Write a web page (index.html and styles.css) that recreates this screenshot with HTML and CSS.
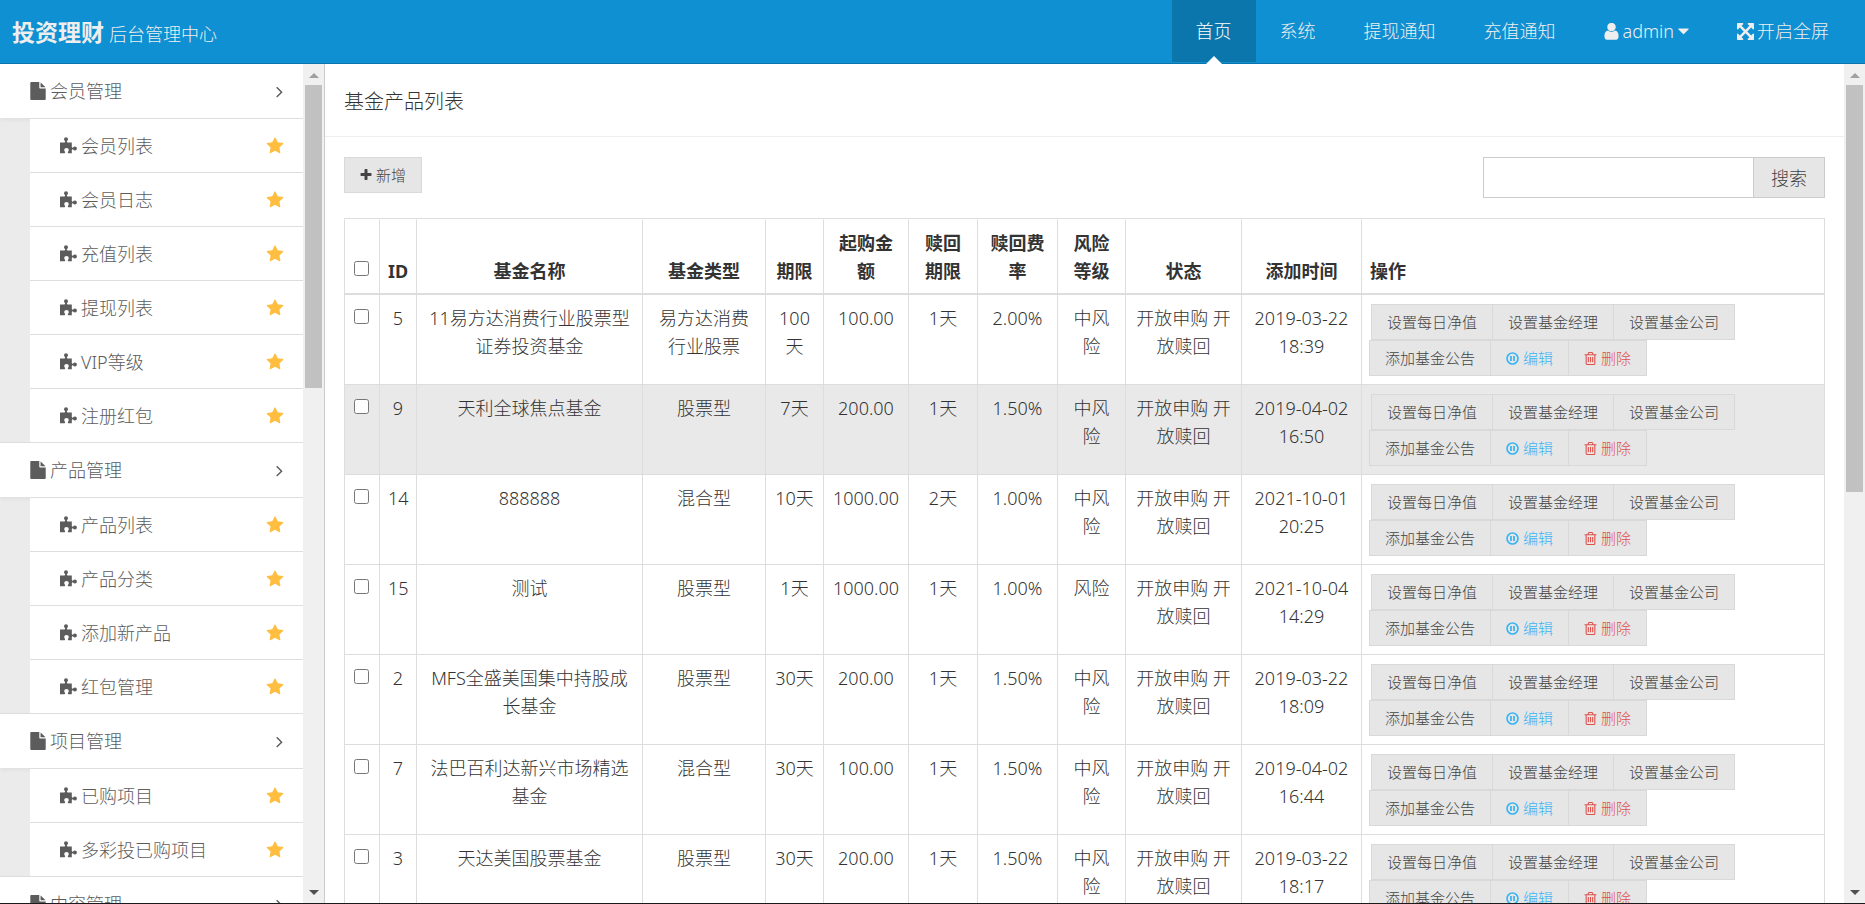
FILE: index.html
```html
<!DOCTYPE html>
<html lang="zh-CN">
<head>
<meta charset="utf-8">
<title>投资理财 后台管理中心</title>
<link rel="stylesheet" href="styles.css">
</head>
<body>
<svg class="sprite" aria-hidden="true">
  <symbol id="i-file" viewBox="128 0 1536 1792"><path d="M1152 512v-472q22 14 36 28l408 408q14 14 28 36h-472zm-128 32q0 40 28 68t68 28h544v1056q0 40-28 68t-68 28h-1344q-40 0-68-28t-28-68v-1600q0-40 28-68t68-28h800v544z"/></symbol>
  <symbol id="i-star" viewBox="0 0 1792 1792"><path d="M1728 647q0 22-26 48l-363 354 86 500q1 7 1 20 0 21-10.5 35.5t-30.5 14.5q-19 0-40-12l-449-236-449 236q-22 12-40 12-21 0-31.5-14.5t-10.5-35.5q0-6 2-20l86-500-364-354q-25-27-25-48 0-37 56-46l502-73 225-455q19-41 49-41t49 41l225 455 502 73q56 9 56 46z"/></symbol>
  <symbol id="i-plus" viewBox="128 128 1536 1536"><path d="M1600 736v192q0 40-28 68t-68 28h-416v416q0 40-28 68t-68 28h-192q-40 0-68-28t-28-68v-416h-416q-40 0-68-28t-28-68v-192q0-40 28-68t68-28h416v-416q0-40 28-68t68-28h192q40 0 68 28t28 68v416h416q40 0 68 28t28 68z"/></symbol>
  <symbol id="i-caret" viewBox="384 0 1024 1792"><path d="M1408 704q0 26-19 45l-448 448q-19 19-45 19t-45-19l-448-448q-19-19-19-45t19-45 45-19h896q26 0 45 19t19 45z"/></symbol>
  <symbol id="i-user" viewBox="256 150 1280 1540"><path d="M1536 1399q0 109-62.500 187t-150.500 78h-854q-88 0-150.500-78t-62.500-187q0-85 8.500-160.500t31.500-152 58.500-131 94-89 134.500-34.500q131 128 313 128t313-128q76 0 134.500 34.500t94 89 58.500 131 31.500 152 8.500 160.500zm-256-887q0 159-112.500 271.500t-271.500 112.500-271.500-112.500-112.500-271.500 112.500-271.500 271.500-112.500 271.500 112.500 112.500 271.500z"/></symbol>
  <symbol id="i-full" viewBox="128 128 1536 1536"><path d="M1411 541l-355 355 355 355 144-144q29-31 70-14 39 17 39 59v448q0 26-19 45t-45 19h-448q-42 0-59-40-17-39 14-69l144-144-355-355-355 355 144 144q31 30 14 69-17 40-59 40h-448q-26 0-45-19t-19-45v-448q0-42 40-59 39-17 69 14l144 144 355-355-355-355-144 144q-19 19-45 19-12 0-24-5-40-17-40-59v-448q0-26 19-45t45-19h448q42 0 59 40 17 39-14 69l-144 144 355 355 355-355-144-144q-31-30-14-69 17-40 59-40h448q26 0 45 19t19 45v448q0 42-39 59-13 5-25 5-26 0-45-19z"/></symbol>
  <symbol id="i-angle" viewBox="589 0 600 1792"><path d="M1171 960q0 13-10 23l-466 466q-10 10-23 10t-23-10l-50-50q-10-10-10-23t10-23l393-393-393-393q-10-10-10-23t10-23l50-50q13-10 23-10 13 0 23 10l466 466q10 10 10 23z"/></symbol>
  <symbol id="i-trash" viewBox="192 128 1408 1536"><path d="M704 736v576q0 14-9 23t-23 9h-64q-14 0-23-9t-9-23v-576q0-14 9-23t23-9h64q14 0 23 9t9 23zm256 0v576q0 14-9 23t-23 9h-64q-14 0-23-9t-9-23v-576q0-14 9-23t23-9h64q14 0 23 9t9 23zm256 0v576q0 14-9 23t-23 9h-64q-14 0-23-9t-9-23v-576q0-14 9-23t23-9h64q14 0 23 9t9 23zm128 724v-948h-896v948q0 22 7 40.500t14.500 27 10.500 8.500h832q3 0 10.500-8.500t14.500-27 7-40.500zm-672-1076h448l-48-117q-7-9-17-11h-317q-10 2-17 11zm928 32v64q0 14-9 23t-23 9h-96v948q0 83-47 143.500t-113 60.500h-832q-66 0-113-58.500t-47-141.500v-952h-96q-14 0-23-9t-9-23v-64q0-14 9-23t23-9h309l70-167q15-37 54-63t79-26h320q40 0 79 26t54 63l70 167h309q14 0 23 9t9 23z"/></symbol>
  <symbol id="i-pause" viewBox="0 0 14 14"><circle cx="7" cy="7" r="5.900" fill="none" stroke="currentColor" stroke-width="1.800"/><path d="M4.400 4.300h1.900v5.400H4.400zM7.700 4.300h1.900v5.400H7.700z"/></symbol>
  <symbol id="i-puzzle" viewBox="0 0 17 17"><path d="M0 5.500H4.300Q5.600 5.200 5 4.100Q4 3.300 4 2.200Q4 .3 6 .3T8 2.200Q8 3.300 7 4.100Q6.400 5.200 7.700 5.500H11.800V9.800Q12 11.300 13 10.600Q13.800 9.600 15 9.600Q16.900 9.600 16.900 11.500T15 13.400Q13.800 13.400 13 12.400Q12 11.700 11.800 13.100V16.300H8.300Q7.400 16 8 14.800Q8.800 14.200 8.800 13Q8.800 11 6.500 11T4.200 13Q4.200 14.200 5 14.800Q5.400 16 4.500 16.300H0Z"/></symbol>
</svg>

<header class="topbar">
  <div class="brand"><strong>投资理财</strong><small>后台管理中心</small></div>
  <nav class="topnav">
    <a class="active" href="#">首页</a>
    <a href="#">系统</a>
    <a href="#">提现通知</a>
    <a href="#">充值通知</a>
    <a href="#"><svg class="ic-user"><use href="#i-user"/></svg>admin<svg class="ic-caret"><use href="#i-caret"/></svg></a>
    <a href="#"><svg class="ic-full"><use href="#i-full"/></svg>开启全屏</a>
  </nav>
</header>

<div class="body">
  <aside class="sidebar">
    <nav class="menu" id="menu"></nav>
    <div class="scroll" aria-hidden="true"><i class="up"></i><div class="track"><div class="thumb"></div></div><i class="down"></i></div>
  </aside>
  <main class="main">
    <div class="page">
      <h1>基金产品列表</h1>
      <div class="tools">
        <button class="btn" type="button"><svg class="ic-plus"><use href="#i-plus"/></svg>新增</button>
        <form class="search"><input type="text" aria-label="搜索"><button type="button">搜索</button></form>
      </div>
      <table>
        <colgroup>
          <col class="c-check"><col class="c-id"><col class="c-name"><col class="c-type"><col class="c-term"><col class="c-amount"><col class="c-redeem"><col class="c-rate"><col class="c-risk"><col class="c-state"><col class="c-time"><col>
        </colgroup>
        <thead>
          <tr><th><input type="checkbox" aria-label="全选"></th><th>ID</th><th>基金名称</th><th>基金类型</th><th>期限</th><th>起购金额</th><th>赎回期限</th><th>赎回费率</th><th>风险等级</th><th>状态</th><th>添加时间</th><th class="ops">操作</th></tr>
        </thead>
        <tbody id="rows"></tbody>
      </table>
    </div>
    <div class="scroll" aria-hidden="true"><i class="up"></i><div class="track"><div class="thumb thumb-main"></div></div><i class="down"></i></div>
  </main>
</div>
<script src="app.js"></script>
</body>
</html>
```
FILE: styles.css
```css
* { box-sizing: border-box; }

body {
  margin: 0;
  height: 100vh;
  display: flex;
  flex-direction: column;
  overflow: hidden;
  border-bottom: 1px solid #1b1b1b;
  background: #fff;
  color: #333;
  font: 300 18px/28px "Noto Sans", "Noto Sans CJK SC", sans-serif;
}

button, input { font: inherit; color: inherit; }
a { color: inherit; text-decoration: none; }
svg { fill: currentColor; flex: none; }
.sprite { display: none; }

.topbar {
  flex: none;
  display: flex;
  justify-content: space-between;
  height: 64px;
  padding: 0 12px;
  background: #0e90d2;
  border-bottom: 1px solid #0b76ac;
  color: #eee;
}
.brand { display: flex; align-items: baseline; gap: 5px; line-height: 64px; }
.brand strong { font-size: 23px; font-weight: 700; }
.brand small { font-size: 18px; }
.topnav { display: flex; height: 62px; }
.topnav a { position: relative; display: flex; align-items: center; padding: 0 24px; }
.topnav .active { background: #0b76ac; color: #fff; }
.topnav .active::after {
  content: "";
  position: absolute;
  left: 50%;
  bottom: -2px;
  margin-left: -8px;
  border: 8px solid transparent;
  border-top: 0;
  border-bottom-color: #fff;
}
.ic-user { width: 15px; height: 17px; margin-right: 4px; }
.ic-caret { width: 11px; height: 18px; margin-left: 4px; }
.ic-full { width: 17px; height: 17px; margin-right: 3px; }

.body { flex: 1; min-height: 0; display: flex; }
.sidebar { flex: none; width: 325px; display: flex; border-right: 1px solid #ccc; overflow: hidden; }
.menu { flex: 1; background: #ebebeb; color: #5c5c5c; }
.menu a { display: flex; align-items: center; height: 54px; background: #fff; }
.menu .group { height: 55px; padding: 0 20px 0 30px; border-top: 1px solid #dedede; box-shadow: 0 2px 4px rgba(0, 0, 0, .05); }
.menu .group:first-child { height: 54px; border-top: 0; }
.menu .item { position: relative; margin-left: 30px; padding: 0 19px 0 30px; border-top: 1px solid #dedede; }
.menu span { flex: 1; }
.ic-file { width: 16px; height: 18px; margin-right: 4px; }
.ic-angle { width: 7px; height: 19px; }
.ic-puzzle { width: 17px; height: 17px; margin-right: 4px; }
.ic-star { width: 18px; height: 18px; color: #ffbe40; }

.scroll { flex: none; width: 21px; display: flex; flex-direction: column; align-items: center; background: #f0f0f0; }
.scroll i { border: 5px solid transparent; }
.scroll .up { margin: 9px 0 7px; border-top: 0; border-bottom-color: #a0a0a0; }
.scroll .down { margin: 7px 0 8px; border-bottom: 0; border-top-color: #505050; }
.track { flex: 1; align-self: stretch; padding: 0 2px; }
.thumb { height: 38%; background: #c1c1c1; }
.thumb-main { height: 51%; }

.main { flex: 1; min-width: 0; display: flex; overflow: hidden; }
.page { flex: 1; min-width: 0; }
h1 { margin: 0; padding: 24px 19px 20px; border-bottom: 1px solid #eee; font-size: 20px; line-height: 28px; font-weight: 300; }
.tools { display: flex; justify-content: space-between; align-items: flex-start; padding: 20px 19px; }
.btn {
  display: flex;
  align-items: center;
  gap: 4px;
  height: 36px;
  padding: 0 15px;
  border: 1px solid #d9d9d9;
  background: #e6e6e6;
  color: #444;
  font-size: 15px;
  white-space: nowrap;
}
.ic-plus { width: 12px; height: 12px; }
.search { display: flex; width: 342px; height: 41px; }
.search input { flex: 1; min-width: 0; padding: 0 10px; border: 1px solid #ccc; background: #fff; }
.search button { width: 72px; margin-left: -1px; padding: 0; border: 1px solid #ccc; background: #e6e6e6; color: #444; }

table {
  width: calc(100% - 38px);
  margin: 0 19px;
  table-layout: fixed;
  border-collapse: separate;
  border-spacing: 0;
  border: 1px solid #ddd;
  border-width: 1px 1px 0 0;
}
.c-check { width: 35px; }
.c-id { width: 37px; }
.c-name { width: 226px; }
.c-type { width: 123px; }
.c-term { width: 58px; }
.c-amount { width: 85px; }
.c-redeem { width: 69px; }
.c-rate { width: 80px; }
.c-risk { width: 68px; }
.c-state { width: 116px; }
.c-time { width: 120px; }
th, td { padding: 9px 8px 8px; border-left: 1px solid #ddd; text-align: center; }
th { border-top: 1px solid #fff; border-bottom: 2px solid #ddd; font-weight: 700; vertical-align: bottom; }
td { border-bottom: 1px solid #ddd; vertical-align: top; }
.ops { text-align: left; }
tr.on { background: #e9e9e9; }
input[type="checkbox"] { display: block; width: 15px; height: 15px; margin: 5px auto 9px 1px; }
.acts { display: flex; flex-wrap: wrap; }
.acts .btn { margin-left: -1px; }
.acts .btn:first-child { margin-left: 1px; }
.acts .edit { color: #3bb4f2; }
.acts .del { color: #dd514c; }
.ic-act { width: 13px; height: 13px; }
```
FILE: app.js
```js
const icon = (cls, id) => `<svg class="${cls}" aria-hidden="true"><use href="#${id}"/></svg>`;

const menu = [
  ['会员管理', ['会员列表', '会员日志', '充值列表', '提现列表', 'VIP等级', '注册红包']],
  ['产品管理', ['产品列表', '产品分类', '添加新产品', '红包管理']],
  ['项目管理', ['已购项目', '多彩投已购项目']],
  ['内容管理', []],
];
document.getElementById('menu').innerHTML = menu.map(([title, items]) =>
  `<a class="group" href="#">${icon('ic-file', 'i-file')}<span>${title}</span>${icon('ic-angle', 'i-angle')}</a>` +
  items.map(t => `<a class="item" href="#">${icon('ic-puzzle', 'i-puzzle')}<span>${t}</span>${icon('ic-star', 'i-star')}</a>`).join('')
).join('');

const rows = [
  [5, '11易方达消费行业股票型证券投资基金', '易方达消费行业股票', '100天', '100.00', '1天', '2.00%', '中风险', '2019-03-22 18:39'],
  [9, '天利全球焦点基金', '股票型', '7天', '200.00', '1天', '1.50%', '中风险', '2019-04-02 16:50'],
  [14, '888888', '混合型', '10天', '1000.00', '2天', '1.00%', '中风险', '2021-10-01 20:25'],
  [15, '测试', '股票型', '1天', '1000.00', '1天', '1.00%', '风险', '2021-10-04 14:29'],
  [2, 'MFS全盛美国集中持股成长基金', '股票型', '30天', '200.00', '1天', '1.50%', '中风险', '2019-03-22 18:09'],
  [7, '法巴百利达新兴市场精选基金', '混合型', '30天', '100.00', '1天', '1.50%', '中风险', '2019-04-02 16:44'],
  [3, '天达美国股票基金', '股票型', '30天', '200.00', '1天', '1.50%', '中风险', '2019-03-22 18:17'],
];
const acts = '<div class="acts">' +
  ['设置每日净值', '设置基金经理', '设置基金公司', '添加基金公告'].map(t => `<button class="btn" type="button">${t}</button>`).join('') +
  `<button class="btn edit" type="button">${icon('ic-act', 'i-pause')}编辑</button>` +
  `<button class="btn del" type="button">${icon('ic-act', 'i-trash')}删除</button></div>`;
document.getElementById('rows').innerHTML = rows.map((r, i) => {
  const cells = [...r.slice(0, 8), '开放申购 开放赎回', r[8]];
  return `<tr${i === 1 ? ' class="on"' : ''}><td><input type="checkbox" aria-label="选择 ${r[0]}"></td>` +
    cells.map(c => `<td>${c}</td>`).join('') + `<td class="ops">${acts}</td></tr>`;
}).join('');
```
